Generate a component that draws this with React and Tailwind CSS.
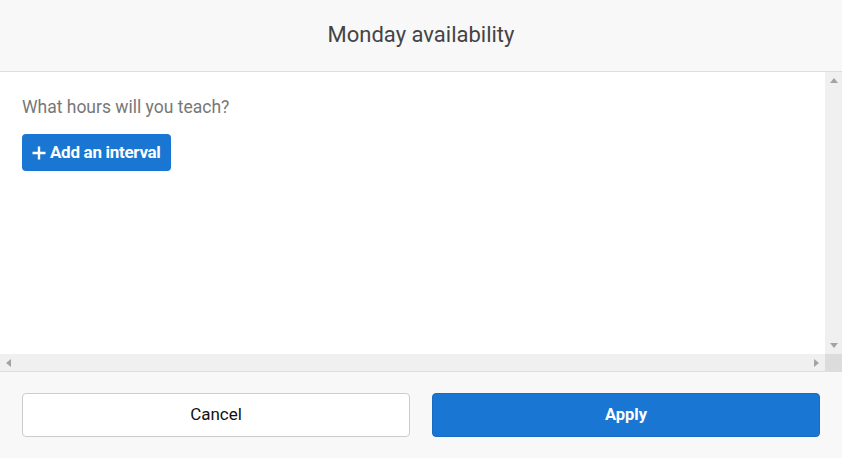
const font = { fontFamily: "Roboto, 'Noto Sans', sans-serif" };

function Arrow({ dir }) {
  const pts = {
    up: "0,6 4,1 8,6",
    down: "0,1 4,6 8,1",
    left: "6,0 1,4 6,8",
    right: "1,0 6,4 1,8",
  }[dir];
  const vertical = dir === "up" || dir === "down";
  return (
    <svg width={vertical ? 8 : 7} height={vertical ? 7 : 8} viewBox={vertical ? "0 0 8 7" : "0 0 7 8"}>
      <polygon points={pts} fill="#a3a3a3" />
    </svg>
  );
}

export default function App() {
  return (
    <div className="w-[842px] h-[458px] flex flex-col bg-white overflow-hidden" style={font}>
      {/* Header */}
      <div className="h-[72px] shrink-0 flex items-center justify-center bg-[#f8f8f8] border-b border-[#dddddd]">
        <h1 className="text-[22px] text-[#444444] pb-[2px]">Monday availability</h1>
      </div>

      {/* Scrollable body */}
      <div className="flex flex-col h-[299px] shrink-0">
        <div className="flex flex-1 min-h-0">
          <div className="flex-1 pl-[22px] pt-[23px]">
            <p className="text-[17.5px] text-[#777777] leading-[24px]">What hours will you teach?</p>
            <button className="mt-[15px] h-[37px] pl-[10px] pr-[10px] flex items-center gap-[4px] rounded-[4px] bg-[#1a76d3] text-white text-[17px] font-bold tracking-[-0.3px]">
              <svg width="14" height="14" viewBox="0 0 14 14">
                <path d="M7 0.5v13M0.5 7h13" stroke="white" strokeWidth="2.4" />
              </svg>
              Add an interval
            </button>
          </div>
          <div className="w-[17px] bg-[#f0f0f0] flex flex-col justify-between items-center py-[5px]">
            <Arrow dir="up" />
            <Arrow dir="down" />
          </div>
        </div>
        <div className="flex h-[17px] shrink-0">
          <div className="flex-1 bg-[#f0f0f0] flex items-center justify-between px-[5px]">
            <Arrow dir="left" />
            <Arrow dir="right" />
          </div>
          <div className="w-[17px] bg-[#dcdcdc]" />
        </div>
      </div>

      {/* Footer */}
      <div className="flex-1 bg-[#f8f8f8] border-t border-[#dddddd] flex gap-[22px] px-[22px] pt-[21px]">
        <button className="flex-1 h-[44px] rounded-[4px] bg-white border border-[#cccccc] text-[17px] text-[#111111] font-normal">
          Cancel
        </button>
        <button className="flex-1 h-[44px] rounded-[4px] bg-[#1a76d3] border border-[#1a6cc0] text-[16.5px] text-white font-bold">
          Apply
        </button>
      </div>
    </div>
  );
}
